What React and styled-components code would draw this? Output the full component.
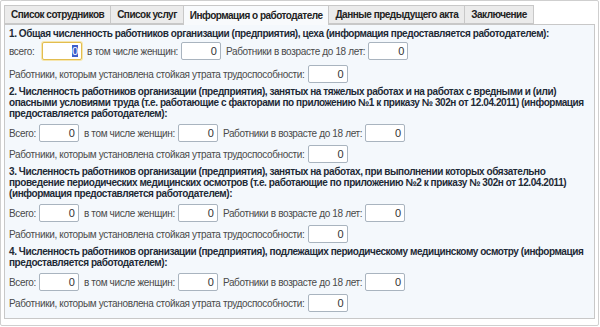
import styled, { createGlobalStyle } from "styled-components";

const GlobalStyle = createGlobalStyle`
  html, body {
    margin: 0;
    padding: 0;
    background: #fff;
  }
  body {
    font-family: "Liberation Sans", Arial, sans-serif;
  }
`;

const tabs = [
  "Список сотрудников",
  "Список услуг",
  "Информация о работодателе",
  "Данные предыдущего акта",
  "Заключение",
];

const sections = [
  {
    title:
      "1. Общая численность работников организации (предприятия), цеха (информация предоставляется работодателем):",
    first: "всего:",
    focused: true,
  },
  {
    title:
      "2. Численность работников организации (предприятия), занятых на тяжелых работах и на работах с вредными и (или) опасными условиями труда (т.е. работающие с факторами по приложению №1 к приказу № 302н от 12.04.2011) (информация предоставляется работодателем):",
    first: "Всего:",
  },
  {
    title:
      "3. Численность работников организации (предприятия), занятых на работах, при выполнении которых обязательно проведение периодических медицинских осмотров (т.е. работающие по приложению №2 к приказу № 302н от 12.04.2011) (информация предоставляется работодателем):",
    first: "Всего:",
  },
  {
    title:
      "4. Численность работников организации (предприятия), подлежащих периодическому медицинскому осмотру (информация предоставляется работодателем):",
    first: "Всего:",
  },
];

const App = () => {
  return (
    <>
      <GlobalStyle />
      <Frame>
        <TabBar>
          {tabs.map((t, i) => (
            <Tab key={t} $active={i === 2}>
              {t}
            </Tab>
          ))}
        </TabBar>
        <Panel>
          {sections.map((s) => (
            <Section key={s.title}>
              <Heading>{s.title}</Heading>
              <Row>
                <Label $wide={s.focused}>{s.first}</Label>
                <Field $focused={s.focused}>
                  <Value $selected={s.focused}>0</Value>
                </Field>
                <Label>в том числе женщин:</Label>
                <Field>
                  <Value>0</Value>
                </Field>
                <Label>Работники в возрасте до 18 лет:</Label>
                <Field>
                  <Value>0</Value>
                </Field>
              </Row>
              <Row>
                <Label>
                  Работники, которым установлена стойкая утрата
                  трудоспособности:
                </Label>
                <Field>
                  <Value>0</Value>
                </Field>
              </Row>
            </Section>
          ))}
        </Panel>
      </Frame>
    </>
  );
};

export default App;

const Frame = styled.div`
  box-sizing: border-box;
  width: 599px;
  height: 326px;
  border: 1px solid #cfcfcf;
  border-radius: 2px;
  padding: 4px 4px 0 3px;
  background: #fff;
`;

const TabBar = styled.div`
  display: flex;
  height: 19px;
  position: relative;
  z-index: 1;
`;

const Tab = styled.div`
  box-sizing: border-box;
  height: ${(p) => (p.$active ? "20px" : "19px")};
  padding: 0 6px;
  display: flex;
  align-items: center;
  font-weight: bold;
  font-size: 10px;
  letter-spacing: -0.5px;
  color: #222;
  white-space: nowrap;
  border: 1px solid #c8c8c8;
  border-bottom: ${(p) => (p.$active ? "none" : "1px solid #c8c8c8")};
  margin-left: -1px;
  background: ${(p) => (p.$active ? "#f8fafc" : "#ebebeb")};
  &:first-child {
    margin-left: 0;
  }
`;

const Panel = styled.div`
  box-sizing: border-box;
  width: 591px;
  height: 295px;
  border: 1px solid #c8c8c8;
  background: #f4f8fc;
  padding: 3px 4px 0;
`;

const Section = styled.div`
  margin-bottom: 3px;
`;

const Heading = styled.div`
  font-weight: bold;
  font-size: 10px;
  letter-spacing: -0.42px;
  line-height: 11px;
  color: #1e2a36;
  margin-bottom: 5px;
  ${Section}:first-child & {
    margin-bottom: 3px;
  }
`;

const Row = styled.div`
  display: flex;
  align-items: center;
  gap: 3px;
  height: 18px;
  & + & {
    margin-top: 3px;
  }
  ${Section}:first-child & + & {
    margin-top: 5px;
  }
`;

const Label = styled.span`
  font-size: 10px;
  letter-spacing: -0.35px;
  color: #4a4a4a;
  white-space: nowrap;
  min-width: ${(p) => (p.$wide ? "30px" : "0")};
`;

const Field = styled.div`
  box-sizing: border-box;
  width: 40px;
  height: 18px;
  margin-right: 2px;
  border: 1px solid ${(p) => (p.$focused ? "#e2bd4f" : "#a9b4bf")};
  box-shadow: ${(p) => (p.$focused ? "0 0 0 1px #f6e6ae" : "none")};
  border-radius: 2px;
  background: #fff;
  display: flex;
  align-items: center;
  justify-content: flex-end;
  padding-right: 3px;
  font-size: 11px;
  color: #333;
`;

const Value = styled.span`
  background: ${(p) => (p.$selected ? "#3d5ecb" : "transparent")};
  color: ${(p) => (p.$selected ? "#fff" : "#333")};
  line-height: 12px;
`;
